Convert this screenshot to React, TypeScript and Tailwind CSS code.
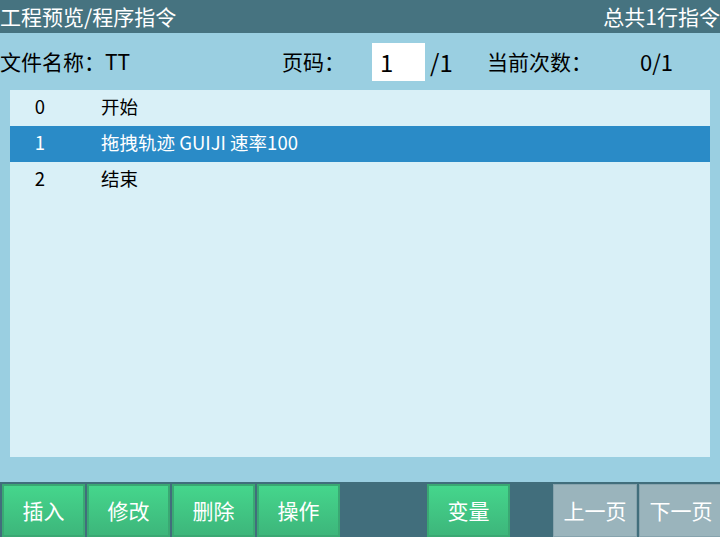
const rows = [
  { no: 0, text: "开始" },
  { no: 1, text: "拖拽轨迹 GUIJI 速率100" },
  { no: 2, text: "结束" },
];

const font = { fontFamily: '"Microsoft YaHei", "Noto Sans CJK SC", "Noto Sans", sans-serif' };

function GreenBtn({ label, className = "" }: { label: string; className?: string }) {
  return (
    <button
      className={`h-[53px] w-[83px] shrink-0 border-2 border-[#3aa873] bg-gradient-to-b from-[#45d68c] to-[#3db67b] text-[21px] text-white ${className}`}
    >
      {label}
    </button>
  );
}

function GrayBtn({ label }: { label: string }) {
  return (
    <button className="h-[53px] w-[84px] shrink-0 border border-[#86a3ad] bg-[#9ab4bc] text-[21px] text-white">
      {label}
    </button>
  );
}

export default function App() {
  return (
    <div className="flex h-[537px] w-[720px] flex-col overflow-hidden bg-[#9acfe1]" style={font}>
      <div className="flex h-[33px] items-center justify-between bg-[#467380] text-[21px] text-white">
        <span>工程预览/程序指令</span>
        <span>总共1行指令</span>
      </div>

      <div className="flex h-[57px] items-center text-[21px] text-black">
        <span className="w-[282px]">文件名称：TT</span>
        <span className="w-[90px]">页码：</span>
        <div className="flex h-[38px] w-[53px] items-center bg-white pl-[8px] text-[24px]">1</div>
        <span className="ml-[5px] w-[57px] text-[24px]">/1</span>
        <span className="w-[153px]">当前次数：</span>
        <span className="text-[22px]">0/1</span>
      </div>

      <div className="mx-[10px] h-[367px] bg-[#d9f0f7]">
        {rows.map((r) => (
          <div
            key={r.no}
            className={`flex h-[36px] items-center pb-[2px] text-[18.5px] ${
              r.no === 1 ? "bg-[#2a8bc7] text-white" : "text-black"
            }`}
          >
            <span className="w-[60px] text-center">{r.no}</span>
            <span className="pl-[31px]">{r.text}</span>
          </div>
        ))}
      </div>

      <div className="mt-[25px] flex flex-1 items-end bg-[#416e7c] pl-[2px]">
        <div className="flex gap-[2px]">
          <GreenBtn label="插入" />
          <GreenBtn label="修改" />
          <GreenBtn label="删除" className="w-[82px]" />
          <GreenBtn label="操作" />
        </div>
        <GreenBtn label="变量" className="ml-[87px]" />
        <div className="ml-[43px] flex gap-[2px]">
          <GrayBtn label="上一页" />
          <GrayBtn label="下一页" />
        </div>
      </div>
    </div>
  );
}
